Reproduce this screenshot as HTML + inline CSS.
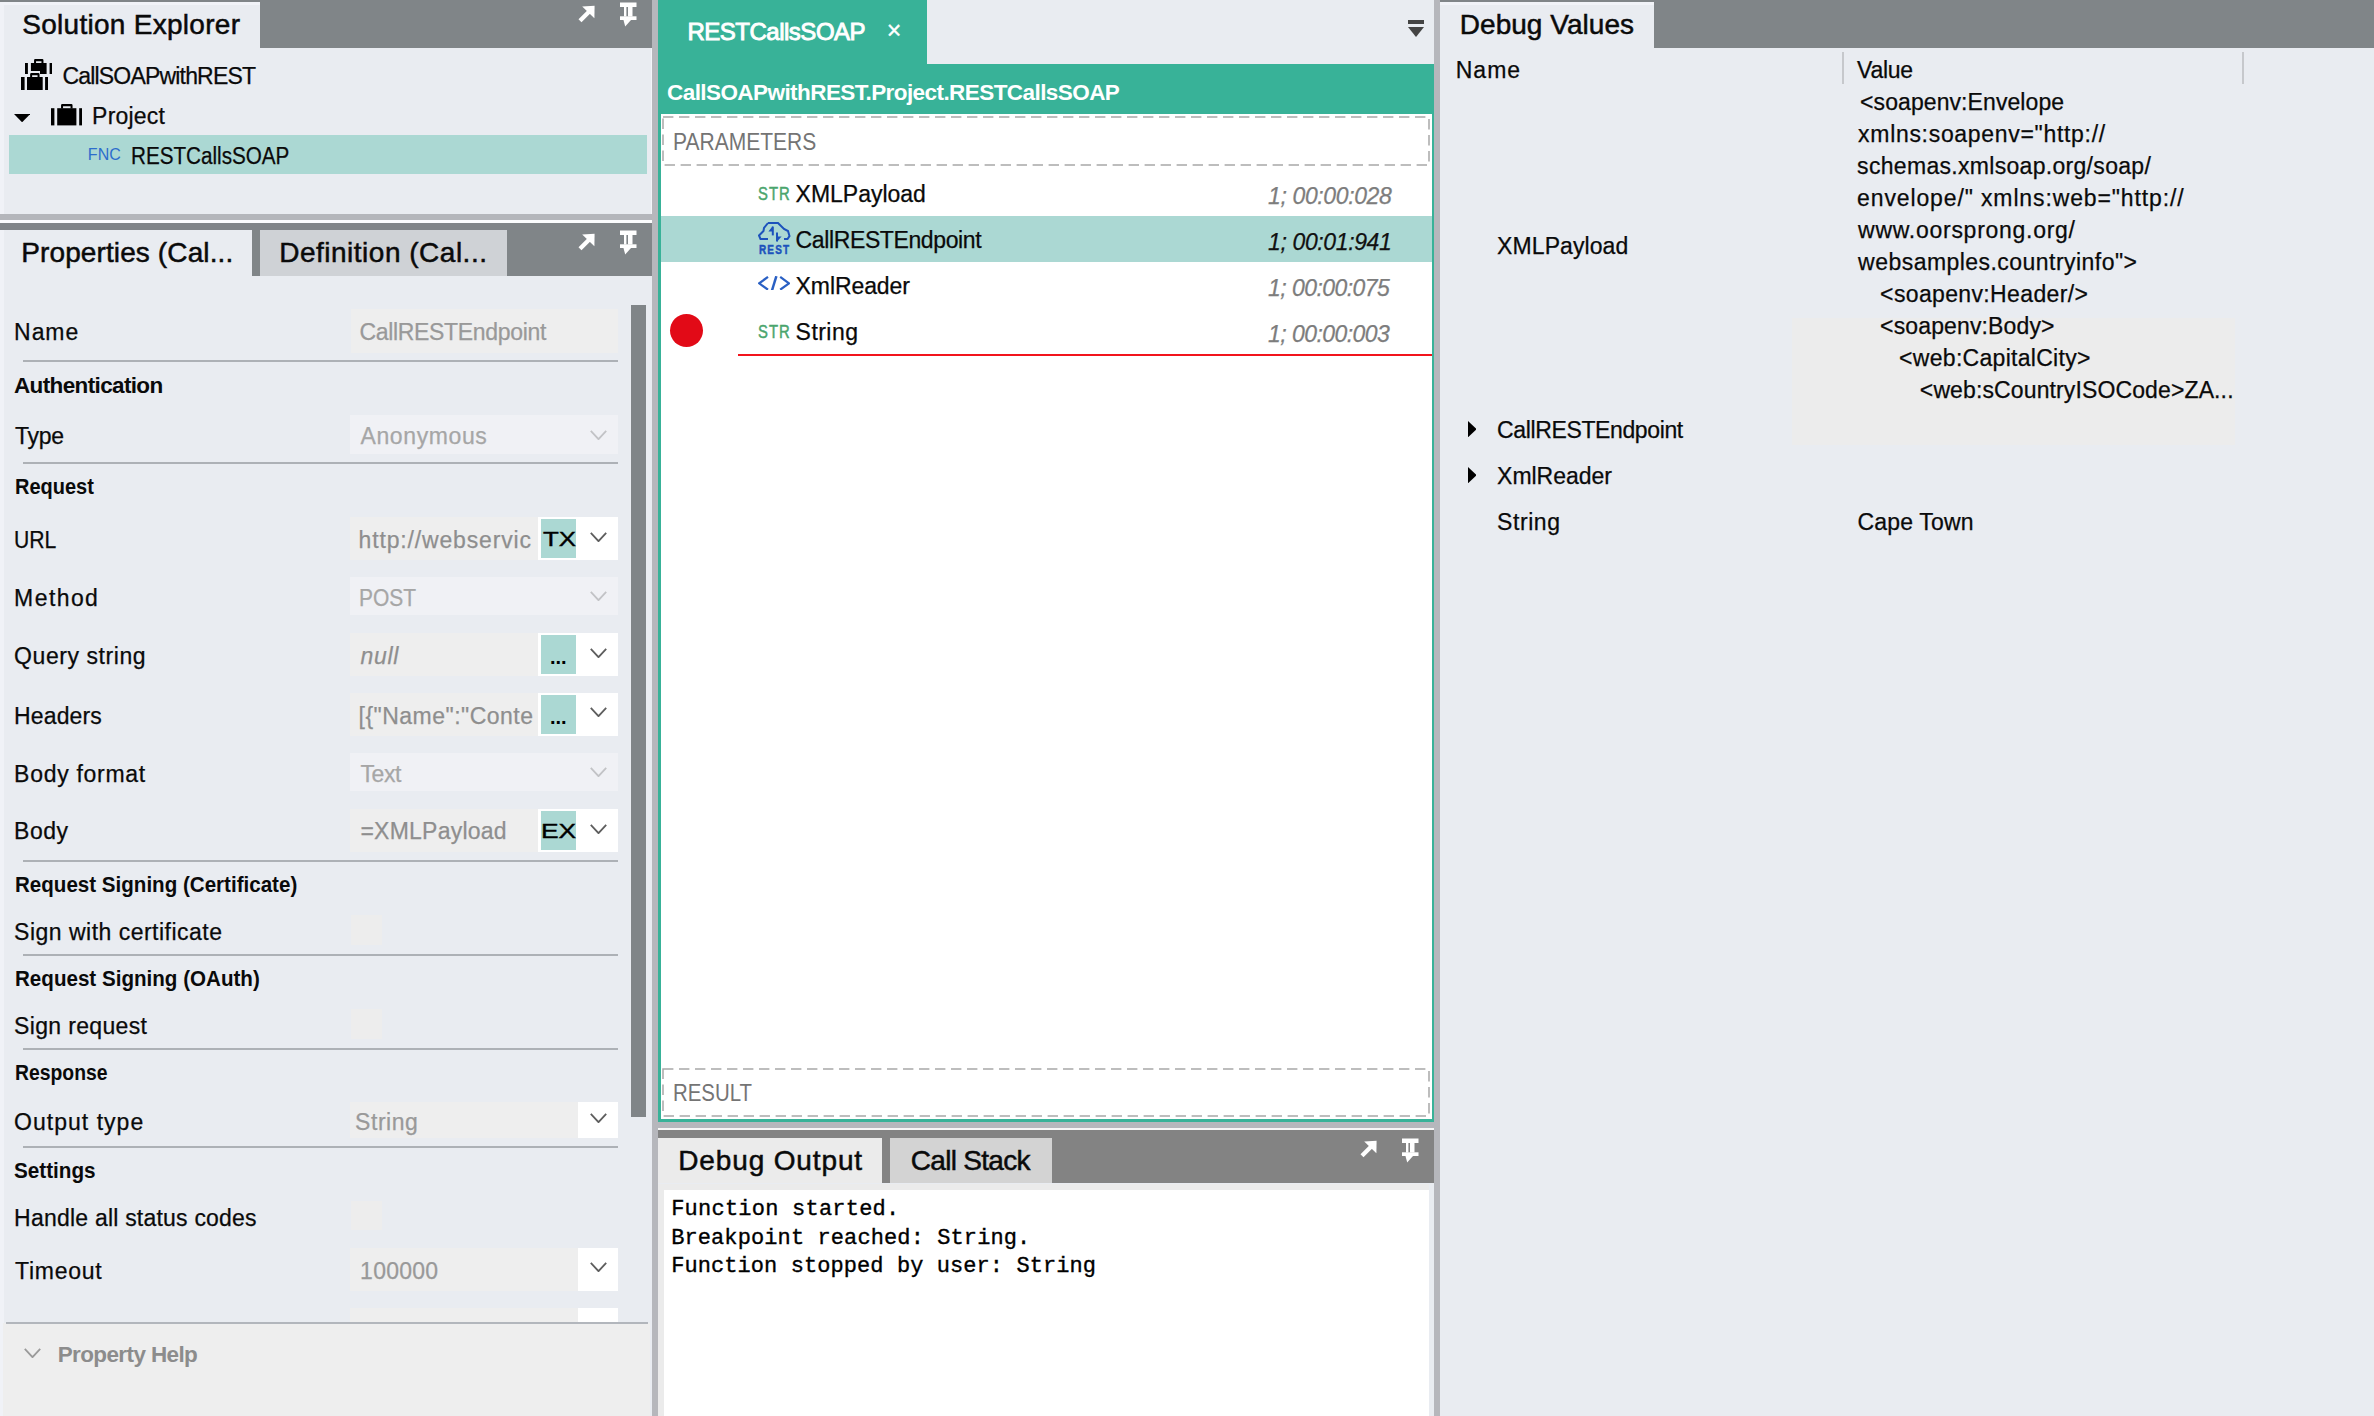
<!DOCTYPE html>
<html lang="en"><head><meta charset="utf-8"><title>RESTCallsSOAP</title>
<style>
html,body{margin:0;padding:0}
body{width:2374px;height:1416px;overflow:hidden;background:#e9ecf1;position:relative}
.r{position:absolute;display:block}
.t{position:absolute;white-space:pre;display:block;transform-origin:0 50%}
.dash{position:absolute;box-sizing:border-box}
</style></head>
<body>
<div class="r" style="left:0px;top:0px;width:652px;height:48px;background:#808588;"></div>
<div class="r" style="left:0px;top:2px;width:260px;height:46px;background:#e9ecf1;"></div>
<div class="r" style="left:0px;top:2px;width:260px;height:2.5px;background:#f1f3f8;"></div>
<div class="r" style="left:0px;top:4.5px;width:4px;height:209.5px;background:#f0f2f7;"></div>
<div class="r" style="left:9px;top:134.6px;width:638px;height:39.4px;background:#abd8d3;"></div>
<div class="r" style="left:0px;top:214.4px;width:652px;height:5.6px;background:#b4b6bb;"></div>
<div class="r" style="left:0px;top:220px;width:652px;height:2.6px;background:#fbfcfd;"></div>
<div class="r" style="left:0px;top:222.6px;width:652px;height:53.4px;background:#808588;"></div>
<div class="r" style="left:651px;top:48px;width:1.3px;height:166.4px;background:#f3f5f9;"></div>
<div class="r" style="left:0px;top:230px;width:252px;height:46px;background:#e9ecf1;"></div>
<div class="r" style="left:260px;top:230px;width:247px;height:46px;background:#cfd2d6;"></div>
<div class="r" style="left:0px;top:230px;width:4px;height:1186px;background:#f0f2f7;"></div>
<div class="r" style="left:631px;top:305px;width:15px;height:812px;background:#808588;"></div>
<div class="r" style="left:652px;top:0px;width:6px;height:1416px;background:#b6b7bc;"></div>
<div class="r" style="left:1434px;top:0px;width:6px;height:1416px;background:#b6b7bc;"></div>
<div class="r" style="left:658px;top:0px;width:269px;height:64px;background:#38b298;"></div>
<div class="r" style="left:658px;top:64px;width:776px;height:1058px;background:#38b298;"></div>
<div class="r" style="left:660.5px;top:114px;width:771.5px;height:1005px;background:#ffffff;"></div>
<div class="r" style="left:660.5px;top:216.3px;width:771.5px;height:45.7px;background:#abd8d3;"></div>
<div class="r" style="left:738px;top:354px;width:694px;height:2px;background:#f2141c;"></div>
<div class="r" style="left:670px;top:314px;width:33px;height:33px;border-radius:50%;background:#e20a17"></div>
<div class="r" style="left:658px;top:1122px;width:776px;height:6px;background:#b6b7bc;"></div>
<div class="r" style="left:658px;top:1127.7px;width:776px;height:2.6px;background:#f7f7f7;"></div>
<div class="r" style="left:658px;top:1130.3px;width:776px;height:53.2px;background:#838383;"></div>
<div class="r" style="left:658px;top:1137.7px;width:224px;height:45.8px;background:#ebebeb;"></div>
<div class="r" style="left:890px;top:1137.7px;width:162px;height:45.8px;background:#d3d3d3;"></div>
<div class="r" style="left:658px;top:1183.5px;width:776px;height:232.5px;background:#ebebeb;"></div>
<div class="r" style="left:664px;top:1189.6px;width:765px;height:226.4px;background:#ffffff;"></div>
<div class="r" style="left:1429px;top:1183px;width:5px;height:233px;background:#e9ecf1;"></div>
<div class="r" style="left:1440px;top:0px;width:934px;height:48px;background:#808588;"></div>
<div class="r" style="left:1440px;top:2px;width:214px;height:46px;background:#e9ecf1;"></div>
<div class="r" style="left:1440px;top:2px;width:214px;height:2.5px;background:#f1f3f8;"></div>
<div class="r" style="left:1842px;top:52px;width:2px;height:32px;background:#c6c8cc;"></div>
<div class="r" style="left:2242px;top:52px;width:2px;height:32px;background:#c6c8cc;"></div>
<div class="r" style="left:1792px;top:318px;width:443px;height:127px;background:#ececec;"></div>
<div class="r" style="left:350.5px;top:308.5px;width:267.5px;height:44.5px;background:#eeeeee;"></div>
<div class="r" style="left:350px;top:415px;width:268px;height:39px;background:#f0f1f5;"></div>
<svg class="r" style="left:589.7px;top:429.7px" width="17" height="10" viewBox="0 0 17 10"><polyline points="0.8,0.8 8.5,9.2 16.2,0.8" fill="none" stroke="#c2c3c6" stroke-width="1.8"/></svg>
<div class="r" style="left:350px;top:517px;width:188px;height:43px;background:#eeeeee;"></div>
<div class="r" style="left:538px;top:517px;width:80px;height:43px;background:#fff;"></div>
<div class="r" style="left:540.5px;top:519px;width:35.5px;height:39px;background:#abd8d3;"></div>
<svg class="r" style="left:589.7px;top:531.8px" width="17" height="10" viewBox="0 0 17 10"><polyline points="0.8,0.8 8.5,9.2 16.2,0.8" fill="none" stroke="#5e5e5e" stroke-width="1.8"/></svg>
<div class="r" style="left:350px;top:577px;width:268px;height:38px;background:#f0f1f5;"></div>
<svg class="r" style="left:589.7px;top:591.1px" width="17" height="10" viewBox="0 0 17 10"><polyline points="0.8,0.8 8.5,9.2 16.2,0.8" fill="none" stroke="#c2c3c6" stroke-width="1.8"/></svg>
<div class="r" style="left:350px;top:633px;width:188px;height:43px;background:#eeeeee;"></div>
<div class="r" style="left:538px;top:633px;width:80px;height:43px;background:#fff;"></div>
<div class="r" style="left:540.5px;top:635px;width:35.5px;height:39px;background:#abd8d3;"></div>
<svg class="r" style="left:589.7px;top:647.8px" width="17" height="10" viewBox="0 0 17 10"><polyline points="0.8,0.8 8.5,9.2 16.2,0.8" fill="none" stroke="#5e5e5e" stroke-width="1.8"/></svg>
<div class="r" style="left:350px;top:693px;width:188px;height:43px;background:#eeeeee;"></div>
<div class="r" style="left:538px;top:693px;width:80px;height:43px;background:#fff;"></div>
<div class="r" style="left:540.5px;top:695px;width:35.5px;height:39px;background:#abd8d3;"></div>
<svg class="r" style="left:589.7px;top:707.2px" width="17" height="10" viewBox="0 0 17 10"><polyline points="0.8,0.8 8.5,9.2 16.2,0.8" fill="none" stroke="#5e5e5e" stroke-width="1.8"/></svg>
<div class="r" style="left:350px;top:753px;width:268px;height:38px;background:#f0f1f5;"></div>
<svg class="r" style="left:589.7px;top:767.2px" width="17" height="10" viewBox="0 0 17 10"><polyline points="0.8,0.8 8.5,9.2 16.2,0.8" fill="none" stroke="#c2c3c6" stroke-width="1.8"/></svg>
<div class="r" style="left:350px;top:808.5px;width:188px;height:43px;background:#eeeeee;"></div>
<div class="r" style="left:538px;top:808.5px;width:80px;height:43px;background:#fff;"></div>
<div class="r" style="left:540.5px;top:810.5px;width:35.5px;height:39px;background:#abd8d3;"></div>
<svg class="r" style="left:589.7px;top:823.5px" width="17" height="10" viewBox="0 0 17 10"><polyline points="0.8,0.8 8.5,9.2 16.2,0.8" fill="none" stroke="#5e5e5e" stroke-width="1.8"/></svg>
<div class="r" style="left:350px;top:1102px;width:228px;height:35.5px;background:#eeeeee;"></div>
<div class="r" style="left:578px;top:1102px;width:40px;height:35.5px;background:#fff;"></div>
<svg class="r" style="left:589.7px;top:1113.0px" width="17" height="10" viewBox="0 0 17 10"><polyline points="0.8,0.8 8.5,9.2 16.2,0.8" fill="none" stroke="#5e5e5e" stroke-width="1.8"/></svg>
<div class="r" style="left:350px;top:1248px;width:228px;height:43px;background:#eeeeee;"></div>
<div class="r" style="left:578px;top:1248px;width:40px;height:43px;background:#fff;"></div>
<svg class="r" style="left:589.7px;top:1262.2px" width="17" height="10" viewBox="0 0 17 10"><polyline points="0.8,0.8 8.5,9.2 16.2,0.8" fill="none" stroke="#5e5e5e" stroke-width="1.8"/></svg>
<div class="r" style="left:350px;top:1307.5px;width:228px;height:14.5px;background:#eeeeee;"></div>
<div class="r" style="left:578px;top:1307.5px;width:40px;height:14.5px;background:#fff;"></div>
<div class="r" style="left:23px;top:360px;width:595px;height:2px;background:#adb1b6;"></div>
<div class="r" style="left:23px;top:461.5px;width:595px;height:2px;background:#adb1b6;"></div>
<div class="r" style="left:23px;top:860px;width:595px;height:2px;background:#adb1b6;"></div>
<div class="r" style="left:23px;top:953.5px;width:595px;height:2px;background:#adb1b6;"></div>
<div class="r" style="left:23px;top:1048px;width:595px;height:2px;background:#adb1b6;"></div>
<div class="r" style="left:23px;top:1146px;width:595px;height:2px;background:#adb1b6;"></div>
<div class="r" style="left:351px;top:915px;width:31px;height:30px;background:#ededed;"></div>
<div class="r" style="left:351px;top:1008.5px;width:31px;height:30.5px;background:#ededed;"></div>
<div class="r" style="left:351px;top:1200.7px;width:31px;height:29.7px;background:#ededed;"></div>
<div class="r" style="left:3px;top:1323px;width:647px;height:93px;background:#eeeeee;"></div>
<div class="r" style="left:6px;top:1321.5px;width:642px;height:2px;background:#b2b6bc;"></div>
<svg class="r" style="left:23.7px;top:1347.6px" width="17" height="10" viewBox="0 0 17 10"><polyline points="0.8,0.8 8.5,9.2 16.2,0.8" fill="none" stroke="#9a9a9a" stroke-width="1.8"/></svg>
<svg class="r" style="left:662px;top:116px" width="768" height="50"><rect x="1" y="1" width="766" height="48" fill="none" stroke="#a8a8a8" stroke-width="1.5" stroke-dasharray="10.4 5.6"/></svg><svg class="r" style="left:662px;top:1068px" width="768" height="49"><rect x="1" y="1" width="766" height="47" fill="none" stroke="#a8a8a8" stroke-width="1.5" stroke-dasharray="10.4 5.6"/></svg>
<svg class="r" style="left:578px;top:5px" width="18" height="19" viewBox="0 0 18 19"><polygon points="4.2,1.6 16.6,0.8 16.4,13.2" fill="#fff"/><line x1="2.0" y1="15.8" x2="11.5" y2="6.2" stroke="#fff" stroke-width="4.2"/></svg>
<svg class="r" style="left:620px;top:2px" width="17" height="25" viewBox="0 0 17 25"><rect x="0" y="0.5" width="16.5" height="4.5" fill="#fff"/><rect x="4" y="5" width="2.4" height="9.5" fill="#fff"/><rect x="8" y="5" width="4.5" height="9.5" fill="#fff"/><rect x="0" y="14.3" width="16.5" height="3.7" fill="#fff"/><polygon points="3.5,18 11,18 5.2,24.5" fill="#fff"/></svg>
<svg class="r" style="left:578px;top:232.5px" width="18" height="19" viewBox="0 0 18 19"><polygon points="4.2,1.6 16.6,0.8 16.4,13.2" fill="#fff"/><line x1="2.0" y1="15.8" x2="11.5" y2="6.2" stroke="#fff" stroke-width="4.2"/></svg>
<svg class="r" style="left:620px;top:230px" width="17" height="25" viewBox="0 0 17 25"><rect x="0" y="0.5" width="16.5" height="4.5" fill="#fff"/><rect x="4" y="5" width="2.4" height="9.5" fill="#fff"/><rect x="8" y="5" width="4.5" height="9.5" fill="#fff"/><rect x="0" y="14.3" width="16.5" height="3.7" fill="#fff"/><polygon points="3.5,18 11,18 5.2,24.5" fill="#fff"/></svg>
<svg class="r" style="left:1360px;top:1139.5px" width="18" height="19" viewBox="0 0 18 19"><polygon points="4.2,1.6 16.6,0.8 16.4,13.2" fill="#fff"/><line x1="2.0" y1="15.8" x2="11.5" y2="6.2" stroke="#fff" stroke-width="4.2"/></svg>
<svg class="r" style="left:1402px;top:1137.5px" width="17" height="25" viewBox="0 0 17 25"><rect x="0" y="0.5" width="16.5" height="4.5" fill="#fff"/><rect x="4" y="5" width="2.4" height="9.5" fill="#fff"/><rect x="8" y="5" width="4.5" height="9.5" fill="#fff"/><rect x="0" y="14.3" width="16.5" height="3.7" fill="#fff"/><polygon points="3.5,18 11,18 5.2,24.5" fill="#fff"/></svg>
<svg class="r" style="left:1408px;top:20px" width="16" height="17" viewBox="0 0 16 17"><rect x="0" y="0" width="16" height="4" fill="#444"/><polygon points="0,7 16,7 8,17" fill="#444"/></svg>
<svg class="r" style="left:24.8px;top:58.5px" width="27.5" height="15.3" viewBox="0 0 27.5 15.3"><rect x="0" y="4.0" width="2.9" height="11.3" fill="#000"/><rect x="5.9" y="4.0" width="15.7" height="11.3" fill="#000"/><rect x="24.6" y="4.0" width="2.9" height="11.3" fill="#000"/><path d="M9.040000000000001,4.2 V1.2 Q9.040000000000001,0 10.24,0 H17.26 Q18.46,0 18.46,1.2 V4.2 H16.46 V2.2 H11.040000000000001 V4.2 Z" fill="#000"/></svg><div class="r" style="left:27.7px;top:71.3px;width:12.5px;height:5.3px;background:#e9ecf1"></div><svg class="r" style="left:20.5px;top:72.6px" width="27.7" height="17.3" viewBox="0 0 27.7 17.3"><rect x="0" y="4.0" width="3.6" height="13.3" fill="#000"/><rect x="6.0" y="4.0" width="15.7" height="13.3" fill="#000"/><rect x="24.099999999999998" y="4.0" width="3.6" height="13.3" fill="#000"/><path d="M9.14,4.2 V1.2 Q9.14,0 10.34,0 H17.360000000000003 Q18.560000000000002,0 18.560000000000002,1.2 V4.2 H16.560000000000002 V2.2 H11.14 V4.2 Z" fill="#000"/></svg>
<svg class="r" style="left:50.5px;top:104.3px" width="31.6" height="21.4" viewBox="0 0 31.6 21.4"><rect x="0" y="4.2" width="3.4" height="17.2" fill="#000"/><rect x="6.199999999999999" y="4.2" width="19.200000000000003" height="17.2" fill="#000"/><rect x="28.200000000000003" y="4.2" width="3.4" height="17.2" fill="#000"/><path d="M10.04,4.4 V1.2 Q10.04,0 11.239999999999998,0 H20.360000000000003 Q21.560000000000002,0 21.560000000000002,1.2 V4.4 H19.560000000000002 V2.2 H12.04 V4.4 Z" fill="#000"/></svg>
<svg class="r" style="left:14.3px;top:114.1px" width="16.2" height="8.3" viewBox="0 0 16.2 8.3"><polygon points="0,0 16.2,0 8.1,8.3" fill="#000"/></svg>
<svg class="r" style="left:1467.5px;top:420.7px" width="8.6" height="16.3" viewBox="0 0 8.6 16.3"><polygon points="0,0 8.6,8.15 0,16.3" fill="#000"/></svg>
<svg class="r" style="left:1467.5px;top:466.5px" width="8.6" height="16.3" viewBox="0 0 8.6 16.3"><polygon points="0,0 8.6,8.15 0,16.3" fill="#000"/></svg>
<svg class="r" style="left:758.2px;top:275.8px" width="32.2" height="14.6" viewBox="0 0 32.2 14.6"><polyline points="10,0.9 1.2,7.3 10,13.7" fill="none" stroke="#2a60c4" stroke-width="2.25"/><line x1="18.4" y1="0.2" x2="14" y2="14.4" stroke="#2a60c4" stroke-width="2.5"/><polyline points="22.2,0.9 31,7.3 22.2,13.7" fill="none" stroke="#2a60c4" stroke-width="2.25"/></svg>
<svg class="r" style="left:758px;top:221.8px" width="33" height="20" viewBox="0 0 33 20"><path d="M10,1 H20 L26,7 L30,9 L31.5,14 L29.5,17 H26" fill="none" stroke="#1c52bc" stroke-width="2"/><path d="M10,1 L6,6 L5.5,9 L1,13.5 L2.5,17 H10" fill="none" stroke="#1c52bc" stroke-width="2"/><path d="M14.8,4.6 V13.4" stroke="#1c52bc" stroke-width="2" fill="none"/><polygon points="14.8,4 10.4,9.4 14.8,9.4" fill="#1c52bc"/><path d="M19,10.5 V19.5" stroke="#1c52bc" stroke-width="2" fill="none"/><polygon points="19,19.8 23.6,14.6 19,14.6" fill="#1c52bc"/></svg>
<span class="t" style="font-family:'Liberation Sans',sans-serif;font-size:28px;line-height:28px;font-weight:400;left:22.25px;top:11.00px;color:#0a0a0a;letter-spacing:0.281px;-webkit-text-stroke:0.5px #0a0a0a;">Solution Explorer</span>
<span class="t" style="font-family:'Liberation Sans',sans-serif;font-size:23px;line-height:23px;font-weight:400;left:62.42px;top:65.00px;color:#0a0a0a;letter-spacing:-0.810px;-webkit-text-stroke:0.25px #0a0a0a;">CallSOAPwithREST</span>
<span class="t" style="font-family:'Liberation Sans',sans-serif;font-size:23px;line-height:23px;font-weight:400;left:92.12px;top:105.00px;color:#0a0a0a;letter-spacing:0.208px;-webkit-text-stroke:0.25px #0a0a0a;">Project</span>
<span class="t" style="font-family:'Liberation Sans',sans-serif;font-size:16px;line-height:16px;font-weight:400;left:87.80px;top:147.00px;color:#2d6dcc;letter-spacing:0.100px;">FNC</span>
<span class="t" style="font-family:'Liberation Sans',sans-serif;font-size:23px;line-height:23px;font-weight:400;left:130.53px;top:145.00px;color:#0a0a0a;transform:scaleX(0.8980);-webkit-text-stroke:0.25px #0a0a0a;">RESTCallsSOAP</span>
<span class="t" style="font-family:'Liberation Sans',sans-serif;font-size:28px;line-height:28px;font-weight:400;left:21.25px;top:239.00px;color:#0a0a0a;letter-spacing:0.112px;-webkit-text-stroke:0.5px #0a0a0a;">Properties (Cal...</span>
<span class="t" style="font-family:'Liberation Sans',sans-serif;font-size:28px;line-height:28px;font-weight:400;left:279.25px;top:239.00px;color:#0a0a0a;letter-spacing:0.500px;-webkit-text-stroke:0.5px #0a0a0a;">Definition (Cal...</span>
<span class="t" style="font-family:'Liberation Sans',sans-serif;font-size:23px;line-height:23px;font-weight:400;left:14.12px;top:321.00px;color:#0a0a0a;letter-spacing:0.917px;-webkit-text-stroke:0.25px #0a0a0a;">Name</span>
<span class="t" style="font-family:'Liberation Sans',sans-serif;font-size:23px;line-height:23px;font-weight:400;left:359.52px;top:321.00px;color:#999999;letter-spacing:-0.330px;-webkit-text-stroke:0.25px #999999;">CallRESTEndpoint</span>
<span class="t" style="font-family:'Liberation Sans',sans-serif;font-size:22.5px;line-height:22.5px;font-weight:700;left:14.00px;top:375.00px;color:#0a0a0a;letter-spacing:-0.638px;">Authentication</span>
<span class="t" style="font-family:'Liberation Sans',sans-serif;font-size:23px;line-height:23px;font-weight:400;left:15.12px;top:425.00px;color:#0a0a0a;letter-spacing:-0.350px;-webkit-text-stroke:0.25px #0a0a0a;">Type</span>
<span class="t" style="font-family:'Liberation Sans',sans-serif;font-size:23px;line-height:23px;font-weight:400;left:360.52px;top:425.00px;color:#a6a6a6;letter-spacing:0.606px;-webkit-text-stroke:0.25px #a6a6a6;">Anonymous</span>
<span class="t" style="font-family:'Liberation Sans',sans-serif;font-size:22.5px;line-height:22.5px;font-weight:700;left:15.00px;top:476.00px;color:#0a0a0a;transform:scaleX(0.8887);">Request</span>
<span class="t" style="font-family:'Liberation Sans',sans-serif;font-size:23px;line-height:23px;font-weight:400;left:14.12px;top:529.00px;color:#0a0a0a;transform:scaleX(0.9199);-webkit-text-stroke:0.25px #0a0a0a;">URL</span>
<span class="t" style="font-family:'Liberation Sans',sans-serif;font-size:23px;line-height:23px;font-weight:400;left:358.52px;top:529.00px;color:#8e8e8e;letter-spacing:0.847px;-webkit-text-stroke:0.25px #8e8e8e;">http://webservic</span>
<span class="t" style="font-family:'Liberation Sans',sans-serif;font-size:20px;line-height:20px;font-weight:400;left:542.50px;top:529.00px;color:#000;transform:scaleX(1.2920);-webkit-text-stroke:0.4px #000;">TX</span>
<span class="t" style="font-family:'Liberation Sans',sans-serif;font-size:23px;line-height:23px;font-weight:400;left:14.12px;top:587.00px;color:#0a0a0a;letter-spacing:1.410px;-webkit-text-stroke:0.25px #0a0a0a;">Method</span>
<span class="t" style="font-family:'Liberation Sans',sans-serif;font-size:23px;line-height:23px;font-weight:400;left:358.52px;top:587.00px;color:#a6a6a6;transform:scaleX(0.9108);-webkit-text-stroke:0.25px #a6a6a6;">POST</span>
<span class="t" style="font-family:'Liberation Sans',sans-serif;font-size:23px;line-height:23px;font-weight:400;left:14.12px;top:645.00px;color:#0a0a0a;letter-spacing:0.568px;-webkit-text-stroke:0.25px #0a0a0a;">Query string</span>
<span class="t" style="font-family:'Liberation Sans',sans-serif;font-size:23px;line-height:23px;font-weight:400;font-style:italic;left:360.52px;top:645.00px;color:#8e8e8e;letter-spacing:0.650px;-webkit-text-stroke:0.25px #8e8e8e;">null</span>
<span class="t" style="font-family:'Liberation Sans',sans-serif;font-size:20px;line-height:20px;font-weight:700;left:550.00px;top:647.00px;color:#000;">...</span>
<span class="t" style="font-family:'Liberation Sans',sans-serif;font-size:23px;line-height:23px;font-weight:400;left:14.12px;top:705.00px;color:#0a0a0a;letter-spacing:0.108px;-webkit-text-stroke:0.25px #0a0a0a;">Headers</span>
<span class="t" style="font-family:'Liberation Sans',sans-serif;font-size:23px;line-height:23px;font-weight:400;left:358.52px;top:705.00px;color:#8e8e8e;letter-spacing:0.489px;-webkit-text-stroke:0.25px #8e8e8e;">[{&quot;Name&quot;:&quot;Conte</span>
<span class="t" style="font-family:'Liberation Sans',sans-serif;font-size:20px;line-height:20px;font-weight:700;left:550.00px;top:707.00px;color:#000;">...</span>
<span class="t" style="font-family:'Liberation Sans',sans-serif;font-size:23px;line-height:23px;font-weight:400;left:14.12px;top:763.00px;color:#0a0a0a;letter-spacing:0.715px;-webkit-text-stroke:0.25px #0a0a0a;">Body format</span>
<span class="t" style="font-family:'Liberation Sans',sans-serif;font-size:23px;line-height:23px;font-weight:400;left:360.52px;top:763.00px;color:#a6a6a6;letter-spacing:-0.433px;-webkit-text-stroke:0.25px #a6a6a6;">Text</span>
<span class="t" style="font-family:'Liberation Sans',sans-serif;font-size:23px;line-height:23px;font-weight:400;left:14.12px;top:820.00px;color:#0a0a0a;letter-spacing:0.500px;-webkit-text-stroke:0.25px #0a0a0a;">Body</span>
<span class="t" style="font-family:'Liberation Sans',sans-serif;font-size:23px;line-height:23px;font-weight:400;left:360.43px;top:820.00px;color:#8e8e8e;letter-spacing:0.230px;-webkit-text-stroke:0.25px #8e8e8e;">=XMLPayload</span>
<span class="t" style="font-family:'Liberation Sans',sans-serif;font-size:20px;line-height:20px;font-weight:400;left:540.50px;top:821.00px;color:#000;transform:scaleX(1.3173);-webkit-text-stroke:0.4px #000;">EX</span>
<span class="t" style="font-family:'Liberation Sans',sans-serif;font-size:22.5px;line-height:22.5px;font-weight:700;left:15.00px;top:874.00px;color:#0a0a0a;transform:scaleX(0.9140);">Request Signing (Certificate)</span>
<span class="t" style="font-family:'Liberation Sans',sans-serif;font-size:23px;line-height:23px;font-weight:400;left:14.12px;top:921.00px;color:#0a0a0a;letter-spacing:0.487px;-webkit-text-stroke:0.25px #0a0a0a;">Sign with certificate</span>
<span class="t" style="font-family:'Liberation Sans',sans-serif;font-size:22.5px;line-height:22.5px;font-weight:700;left:15.00px;top:968.00px;color:#0a0a0a;transform:scaleX(0.9150);">Request Signing (OAuth)</span>
<span class="t" style="font-family:'Liberation Sans',sans-serif;font-size:23px;line-height:23px;font-weight:400;left:14.12px;top:1015.00px;color:#0a0a0a;letter-spacing:0.332px;-webkit-text-stroke:0.25px #0a0a0a;">Sign request</span>
<span class="t" style="font-family:'Liberation Sans',sans-serif;font-size:22.5px;line-height:22.5px;font-weight:700;left:15.00px;top:1062.00px;color:#0a0a0a;transform:scaleX(0.8604);">Response</span>
<span class="t" style="font-family:'Liberation Sans',sans-serif;font-size:23px;line-height:23px;font-weight:400;left:14.12px;top:1111.00px;color:#0a0a0a;letter-spacing:1.015px;-webkit-text-stroke:0.25px #0a0a0a;">Output type</span>
<span class="t" style="font-family:'Liberation Sans',sans-serif;font-size:23px;line-height:23px;font-weight:400;left:355.12px;top:1111.00px;color:#999999;letter-spacing:0.530px;-webkit-text-stroke:0.25px #999999;">String</span>
<span class="t" style="font-family:'Liberation Sans',sans-serif;font-size:22.5px;line-height:22.5px;font-weight:700;left:14.00px;top:1160.00px;color:#0a0a0a;transform:scaleX(0.9195);">Settings</span>
<span class="t" style="font-family:'Liberation Sans',sans-serif;font-size:23px;line-height:23px;font-weight:400;left:14.12px;top:1207.00px;color:#0a0a0a;letter-spacing:0.214px;-webkit-text-stroke:0.25px #0a0a0a;">Handle all status codes</span>
<span class="t" style="font-family:'Liberation Sans',sans-serif;font-size:23px;line-height:23px;font-weight:400;left:15.12px;top:1260.00px;color:#0a0a0a;letter-spacing:0.725px;-webkit-text-stroke:0.25px #0a0a0a;">Timeout</span>
<span class="t" style="font-family:'Liberation Sans',sans-serif;font-size:23px;line-height:23px;font-weight:400;left:360.12px;top:1260.00px;color:#999999;letter-spacing:0.250px;-webkit-text-stroke:0.25px #999999;">100000</span>
<span class="t" style="font-family:'Liberation Sans',sans-serif;font-size:22.5px;line-height:22.5px;font-weight:700;left:57.70px;top:1344.00px;color:#8c8c8c;letter-spacing:-0.617px;">Property Help</span>
<span class="t" style="font-family:'Liberation Sans',sans-serif;font-size:24px;line-height:24px;font-weight:400;left:687.45px;top:20.00px;color:#fff;letter-spacing:-0.492px;-webkit-text-stroke:0.9px #fff;">RESTCallsSOAP</span>
<span class="t" style="font-family:'Liberation Sans',sans-serif;font-size:25px;line-height:25px;font-weight:400;left:886.65px;top:18.00px;color:#fff;-webkit-text-stroke:0.3px #fff;">×</span>
<span class="t" style="font-family:'Liberation Sans',sans-serif;font-size:22.5px;line-height:22.5px;font-weight:700;left:667.00px;top:82.00px;color:#fff;letter-spacing:-0.568px;">CallSOAPwithREST.Project.RESTCallsSOAP</span>
<span class="t" style="font-family:'Liberation Sans',sans-serif;font-size:24px;line-height:24px;font-weight:400;left:673.00px;top:130.00px;color:#747474;transform:scaleX(0.8758);">PARAMETERS</span>
<span class="t" style="font-family:'Liberation Sans',sans-serif;font-size:19px;line-height:19px;font-weight:400;left:757.65px;top:184.00px;color:#4aa56d;letter-spacing:1.295px;transform:scaleX(0.7800);-webkit-text-stroke:0.5px #4aa56d;">STR</span>
<span class="t" style="font-family:'Liberation Sans',sans-serif;font-size:23px;line-height:23px;font-weight:400;left:795.62px;top:183.00px;color:#0a0a0a;letter-spacing:-0.017px;-webkit-text-stroke:0.25px #0a0a0a;">XMLPayload</span>
<span class="t" style="font-family:'Liberation Sans',sans-serif;font-size:23px;line-height:23px;font-weight:400;font-style:italic;left:1268.12px;top:185.00px;color:#7d7d7d;letter-spacing:-0.386px;-webkit-text-stroke:0.25px #7d7d7d;">1; 00:00:028</span>
<span class="t" style="font-family:'Liberation Sans',sans-serif;font-size:13.5px;line-height:13.5px;font-weight:700;left:759.45px;top:243.00px;color:#1c52bc;letter-spacing:1.532px;transform:scaleX(0.7400);-webkit-text-stroke:0.5px #1c52bc;">REST</span>
<span class="t" style="font-family:'Liberation Sans',sans-serif;font-size:23px;line-height:23px;font-weight:400;left:795.62px;top:229.00px;color:#0a0a0a;letter-spacing:-0.383px;-webkit-text-stroke:0.25px #0a0a0a;">CallRESTEndpoint</span>
<span class="t" style="font-family:'Liberation Sans',sans-serif;font-size:23px;line-height:23px;font-weight:400;font-style:italic;left:1268.12px;top:231.00px;color:#111;letter-spacing:-0.386px;-webkit-text-stroke:0.25px #111;">1; 00:01:941</span>
<span class="t" style="font-family:'Liberation Sans',sans-serif;font-size:23px;line-height:23px;font-weight:400;left:795.62px;top:275.00px;color:#0a0a0a;letter-spacing:-0.094px;-webkit-text-stroke:0.25px #0a0a0a;">XmlReader</span>
<span class="t" style="font-family:'Liberation Sans',sans-serif;font-size:23px;line-height:23px;font-weight:400;font-style:italic;left:1268.12px;top:277.00px;color:#7d7d7d;letter-spacing:-0.568px;-webkit-text-stroke:0.25px #7d7d7d;">1; 00:00:075</span>
<span class="t" style="font-family:'Liberation Sans',sans-serif;font-size:19px;line-height:19px;font-weight:400;left:757.65px;top:322.00px;color:#4aa56d;letter-spacing:1.295px;transform:scaleX(0.7800);-webkit-text-stroke:0.5px #4aa56d;">STR</span>
<span class="t" style="font-family:'Liberation Sans',sans-serif;font-size:23px;line-height:23px;font-weight:400;left:795.62px;top:321.00px;color:#0a0a0a;letter-spacing:0.450px;-webkit-text-stroke:0.25px #0a0a0a;">String</span>
<span class="t" style="font-family:'Liberation Sans',sans-serif;font-size:23px;line-height:23px;font-weight:400;font-style:italic;left:1268.12px;top:323.00px;color:#7d7d7d;letter-spacing:-0.568px;-webkit-text-stroke:0.25px #7d7d7d;">1; 00:00:003</span>
<span class="t" style="font-family:'Liberation Sans',sans-serif;font-size:24px;line-height:24px;font-weight:400;left:673.00px;top:1081.00px;color:#747474;transform:scaleX(0.8506);">RESULT</span>
<span class="t" style="font-family:'Liberation Sans',sans-serif;font-size:28px;line-height:28px;font-weight:400;left:678.25px;top:1147.00px;color:#0a0a0a;letter-spacing:0.864px;-webkit-text-stroke:0.5px #0a0a0a;">Debug Output</span>
<span class="t" style="font-family:'Liberation Sans',sans-serif;font-size:28px;line-height:28px;font-weight:400;left:910.75px;top:1147.00px;color:#0a0a0a;letter-spacing:-0.700px;-webkit-text-stroke:0.5px #0a0a0a;">Call Stack</span>
<span class="t" style="font-family:'Liberation Mono',monospace;font-size:22px;line-height:22px;font-weight:400;left:671.17px;top:1199.00px;color:#000;letter-spacing:0.228px;-webkit-text-stroke:0.35px #000;">Function started.</span>
<span class="t" style="font-family:'Liberation Mono',monospace;font-size:22px;line-height:22px;font-weight:400;left:671.17px;top:1228.00px;color:#000;letter-spacing:0.102px;-webkit-text-stroke:0.35px #000;">Breakpoint reached: String.</span>
<span class="t" style="font-family:'Liberation Mono',monospace;font-size:22px;line-height:22px;font-weight:400;left:671.17px;top:1256.00px;color:#000;letter-spacing:0.076px;-webkit-text-stroke:0.35px #000;">Function stopped by user: String</span>
<span class="t" style="font-family:'Liberation Sans',sans-serif;font-size:28px;line-height:28px;font-weight:400;left:1459.75px;top:11.00px;color:#0a0a0a;letter-spacing:0.045px;-webkit-text-stroke:0.5px #0a0a0a;">Debug Values</span>
<span class="t" style="font-family:'Liberation Sans',sans-serif;font-size:23px;line-height:23px;font-weight:400;left:1455.72px;top:59.00px;color:#0a0a0a;letter-spacing:1.017px;-webkit-text-stroke:0.25px #0a0a0a;">Name</span>
<span class="t" style="font-family:'Liberation Sans',sans-serif;font-size:23px;line-height:23px;font-weight:400;left:1857.12px;top:59.00px;color:#0a0a0a;letter-spacing:-0.312px;-webkit-text-stroke:0.25px #0a0a0a;">Value</span>
<span class="t" style="font-family:'Liberation Sans',sans-serif;font-size:23px;line-height:23px;font-weight:400;left:1860.12px;top:91.00px;color:#0a0a0a;letter-spacing:0.078px;-webkit-text-stroke:0.25px #0a0a0a;">&lt;soapenv:Envelope</span>
<span class="t" style="font-family:'Liberation Sans',sans-serif;font-size:23px;line-height:23px;font-weight:400;left:1858.12px;top:123.00px;color:#0a0a0a;letter-spacing:0.690px;-webkit-text-stroke:0.25px #0a0a0a;">xmlns:soapenv=&quot;http://</span>
<span class="t" style="font-family:'Liberation Sans',sans-serif;font-size:23px;line-height:23px;font-weight:400;left:1857.12px;top:155.00px;color:#0a0a0a;letter-spacing:0.306px;-webkit-text-stroke:0.25px #0a0a0a;">schemas.xmlsoap.org/soap/</span>
<span class="t" style="font-family:'Liberation Sans',sans-serif;font-size:23px;line-height:23px;font-weight:400;left:1857.12px;top:187.00px;color:#0a0a0a;letter-spacing:0.870px;-webkit-text-stroke:0.25px #0a0a0a;">envelope/&quot; xmlns:web=&quot;http://</span>
<span class="t" style="font-family:'Liberation Sans',sans-serif;font-size:23px;line-height:23px;font-weight:400;left:1858.12px;top:219.00px;color:#0a0a0a;letter-spacing:0.726px;-webkit-text-stroke:0.25px #0a0a0a;">www.oorsprong.org/</span>
<span class="t" style="font-family:'Liberation Sans',sans-serif;font-size:23px;line-height:23px;font-weight:400;left:1858.12px;top:251.00px;color:#0a0a0a;letter-spacing:0.457px;-webkit-text-stroke:0.25px #0a0a0a;">websamples.countryinfo&quot;&gt;</span>
<span class="t" style="font-family:'Liberation Sans',sans-serif;font-size:23px;line-height:23px;font-weight:400;left:1880.12px;top:283.00px;color:#0a0a0a;letter-spacing:0.359px;-webkit-text-stroke:0.25px #0a0a0a;">&lt;soapenv:Header/&gt;</span>
<span class="t" style="font-family:'Liberation Sans',sans-serif;font-size:23px;line-height:23px;font-weight:400;left:1880.12px;top:315.00px;color:#0a0a0a;letter-spacing:0.135px;-webkit-text-stroke:0.25px #0a0a0a;">&lt;soapenv:Body&gt;</span>
<span class="t" style="font-family:'Liberation Sans',sans-serif;font-size:23px;line-height:23px;font-weight:400;left:1899.12px;top:347.00px;color:#0a0a0a;letter-spacing:0.291px;-webkit-text-stroke:0.25px #0a0a0a;">&lt;web:CapitalCity&gt;</span>
<span class="t" style="font-family:'Liberation Sans',sans-serif;font-size:23px;line-height:23px;font-weight:400;left:1919.83px;top:379.00px;color:#0a0a0a;letter-spacing:0.122px;-webkit-text-stroke:0.25px #0a0a0a;">&lt;web:sCountryISOCode&gt;ZA...</span>
<span class="t" style="font-family:'Liberation Sans',sans-serif;font-size:23px;line-height:23px;font-weight:400;left:1497.12px;top:235.00px;color:#0a0a0a;letter-spacing:0.083px;-webkit-text-stroke:0.25px #0a0a0a;">XMLPayload</span>
<span class="t" style="font-family:'Liberation Sans',sans-serif;font-size:23px;line-height:23px;font-weight:400;left:1497.12px;top:419.00px;color:#0a0a0a;letter-spacing:-0.377px;-webkit-text-stroke:0.25px #0a0a0a;">CallRESTEndpoint</span>
<span class="t" style="font-family:'Liberation Sans',sans-serif;font-size:23px;line-height:23px;font-weight:400;left:1497.12px;top:465.00px;color:#0a0a0a;letter-spacing:-0.044px;-webkit-text-stroke:0.25px #0a0a0a;">XmlReader</span>
<span class="t" style="font-family:'Liberation Sans',sans-serif;font-size:23px;line-height:23px;font-weight:400;left:1497.12px;top:511.00px;color:#0a0a0a;letter-spacing:0.550px;-webkit-text-stroke:0.25px #0a0a0a;">String</span>
<span class="t" style="font-family:'Liberation Sans',sans-serif;font-size:23px;line-height:23px;font-weight:400;left:1857.53px;top:511.00px;color:#0a0a0a;letter-spacing:0.162px;-webkit-text-stroke:0.25px #0a0a0a;">Cape Town</span>
</body></html>
